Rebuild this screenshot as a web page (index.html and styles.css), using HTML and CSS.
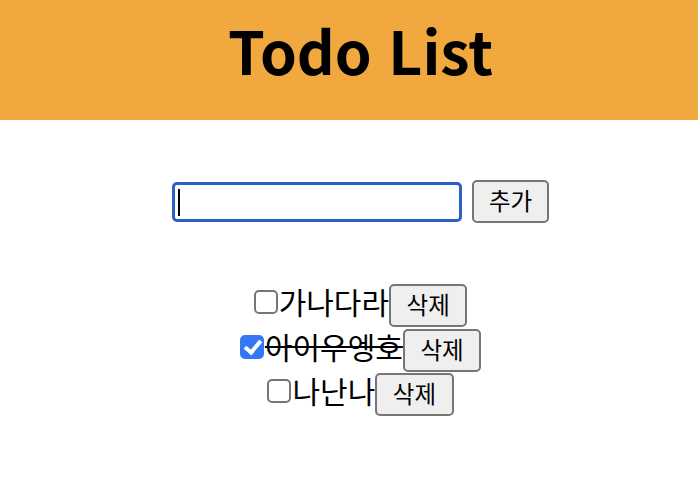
FILE: index.html
```html
<!DOCTYPE html>
<html lang="ko">
<head>
<meta charset="utf-8">
<title>Todo List</title>
<link rel="stylesheet" href="styles.css">
</head>
<body>
<header class="header">
  <h1 class="title">Todo List</h1>
</header>
<main class="main">
  <form class="add-form">
    <div class="input-wrap">
      <input class="todo-input" type="text">
      <span class="caret"></span>
    </div>
    <button class="btn" type="button">추가</button>
  </form>
  <ul class="todo-list">
    <li class="todo-item"><input class="check" type="checkbox"><span class="todo-text">가나다라</span><button class="btn" type="button">삭제</button></li>
    <li class="todo-item"><input class="check" type="checkbox" checked><span class="todo-text done">아이우엥호</span><button class="btn" type="button">삭제</button></li>
    <li class="todo-item"><input class="check" type="checkbox"><span class="todo-text">나난나</span><button class="btn" type="button">삭제</button></li>
  </ul>
</main>
</body>
</html>
```

FILE: styles.css
```css
html, body {
  margin: 0;
  padding: 0;
  background: #ffffff;
  font-family: "Noto Sans CJK KR", "Noto Sans", sans-serif;
  color: #000;
}

.header {
  box-sizing: border-box;
  height: 120px;
  padding: 7px 0 0 23px;
  background: #f1a83e;
  text-align: center;
}

.title {
  margin: 0;
  font-size: 59px;
  font-weight: 700;
  line-height: normal;
}

.main {
  padding-left: 23px;
}

.add-form {
  margin: 60px 0 0;
  display: flex;
  justify-content: center;
  align-items: center;
  gap: 10px;
}

.input-wrap {
  position: relative;
  display: flex;
}

.todo-input {
  box-sizing: border-box;
  width: 290px;
  height: 40px;
  border: 3px solid #2c5fc7;
  border-radius: 5px;
  outline: none;
  font-size: 24px;
  font-family: inherit;
  padding: 0 4px;
  background: #fff;
}

.caret {
  position: absolute;
  left: 6px;
  top: 7px;
  width: 2px;
  height: 27px;
  background: #000;
}

.btn {
  box-sizing: border-box;
  height: 43px;
  font-family: inherit;
  font-size: 23.5px;
  line-height: 36px;
  padding: 0 15.5px 3px;
  border: 2px solid #767676;
  border-radius: 5px;
  background: #efefef;
  color: #000;
}

.add-form .btn {
  padding-left: 15px;
  padding-right: 15px;
}

.todo-list {
  list-style: none;
  margin: 61px 0 0;
  padding: 0;
  display: flex;
  flex-direction: column;
  align-items: center;
  gap: 1.5px;
}

.todo-item {
  display: flex;
  align-items: baseline;
}

.check {
  appearance: none;
  -webkit-appearance: none;
  position: relative;
  flex: none;
  box-sizing: border-box;
  width: 24px;
  height: 24px;
  margin: 0 1px 0 0;
  border: 2px solid #767676;
  border-radius: 5px;
  background: #fff;
}

.check:checked {
  border-color: #3478f6;
  background: #3478f6;
}

.check:checked::after {
  content: "";
  position: absolute;
  left: 6px;
  top: 0px;
  width: 6px;
  height: 13px;
  border-right: 4px solid #fff;
  border-bottom: 4px solid #fff;
  transform: rotate(40deg);
}

.todo-text {
  font-size: 30px;
  line-height: 30px;
}

.done {
  text-decoration: line-through;
  text-decoration-thickness: 2px;
}
```
